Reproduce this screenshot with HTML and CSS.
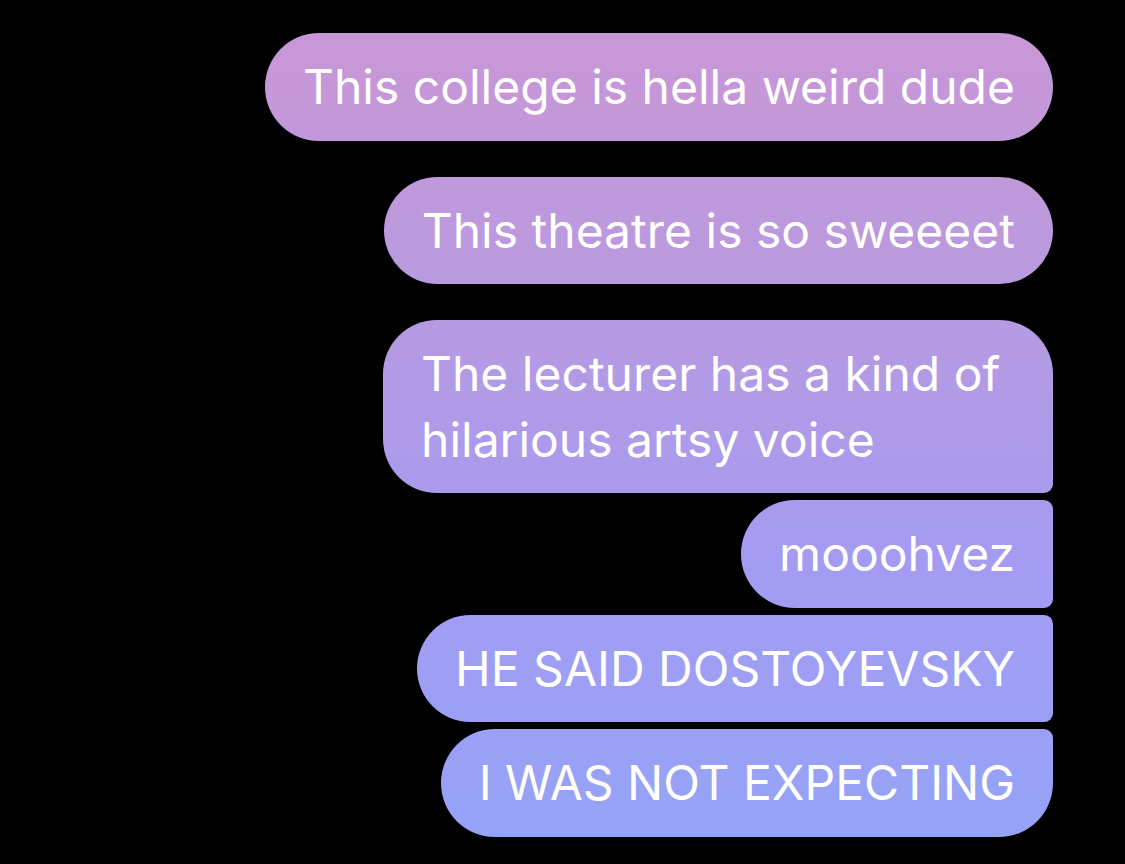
FILE: index.html
```html
<!DOCTYPE html>
<html lang="en">
<head>
    <meta charset="UTF-8">
    <meta name="viewport" content="width=device-width, initial-scale=1.0">
    <title>Messages</title>
    <link rel="stylesheet" href="styles.css">
</head>
<body>
    <div class="thread">
        <div class="group">
            <div class="bubble solo">This college is hella weird dude</div>
        </div>
        <div class="group">
            <div class="bubble solo">This theatre is so sweeeet</div>
        </div>
        <div class="group">
            <div class="bubble first wide">The lecturer has a kind of hilarious artsy voice</div>
            <div class="bubble middle">mooohvez</div>
            <div class="bubble middle">HE SAID DOSTOYEVSKY</div>
            <div class="bubble last">I WAS NOT EXPECTING</div>
        </div>
    </div>
</body>
</html>
```
FILE: styles.css
```css
body {
    margin: 0;
    background: #000;
    font-family: Inter, "Noto Sans", sans-serif;
}

.thread {
    display: flex;
    flex-direction: column;
    align-items: flex-end;
    gap: 36px;
    padding: 33px 72px 0 0;
}

.group {
    display: flex;
    flex-direction: column;
    align-items: flex-end;
    gap: 7px;
}

.bubble {
    box-sizing: border-box;
    padding: 21px 38px;
    font-size: 48px;
    line-height: 65.5px;
    color: #fff;
    border-radius: 54px;
    background: linear-gradient(to bottom, #cb96d5 0px, #b89ae0 300px, #a49bf2 560px, #93a4f8 864px);
    background-attachment: fixed;
}

.bubble.wide {
    width: 670px;
}

.first {
    border-bottom-right-radius: 9px;
}

.middle {
    border-top-right-radius: 9px;
    border-bottom-right-radius: 9px;
}

.last {
    border-top-right-radius: 9px;
}
```
